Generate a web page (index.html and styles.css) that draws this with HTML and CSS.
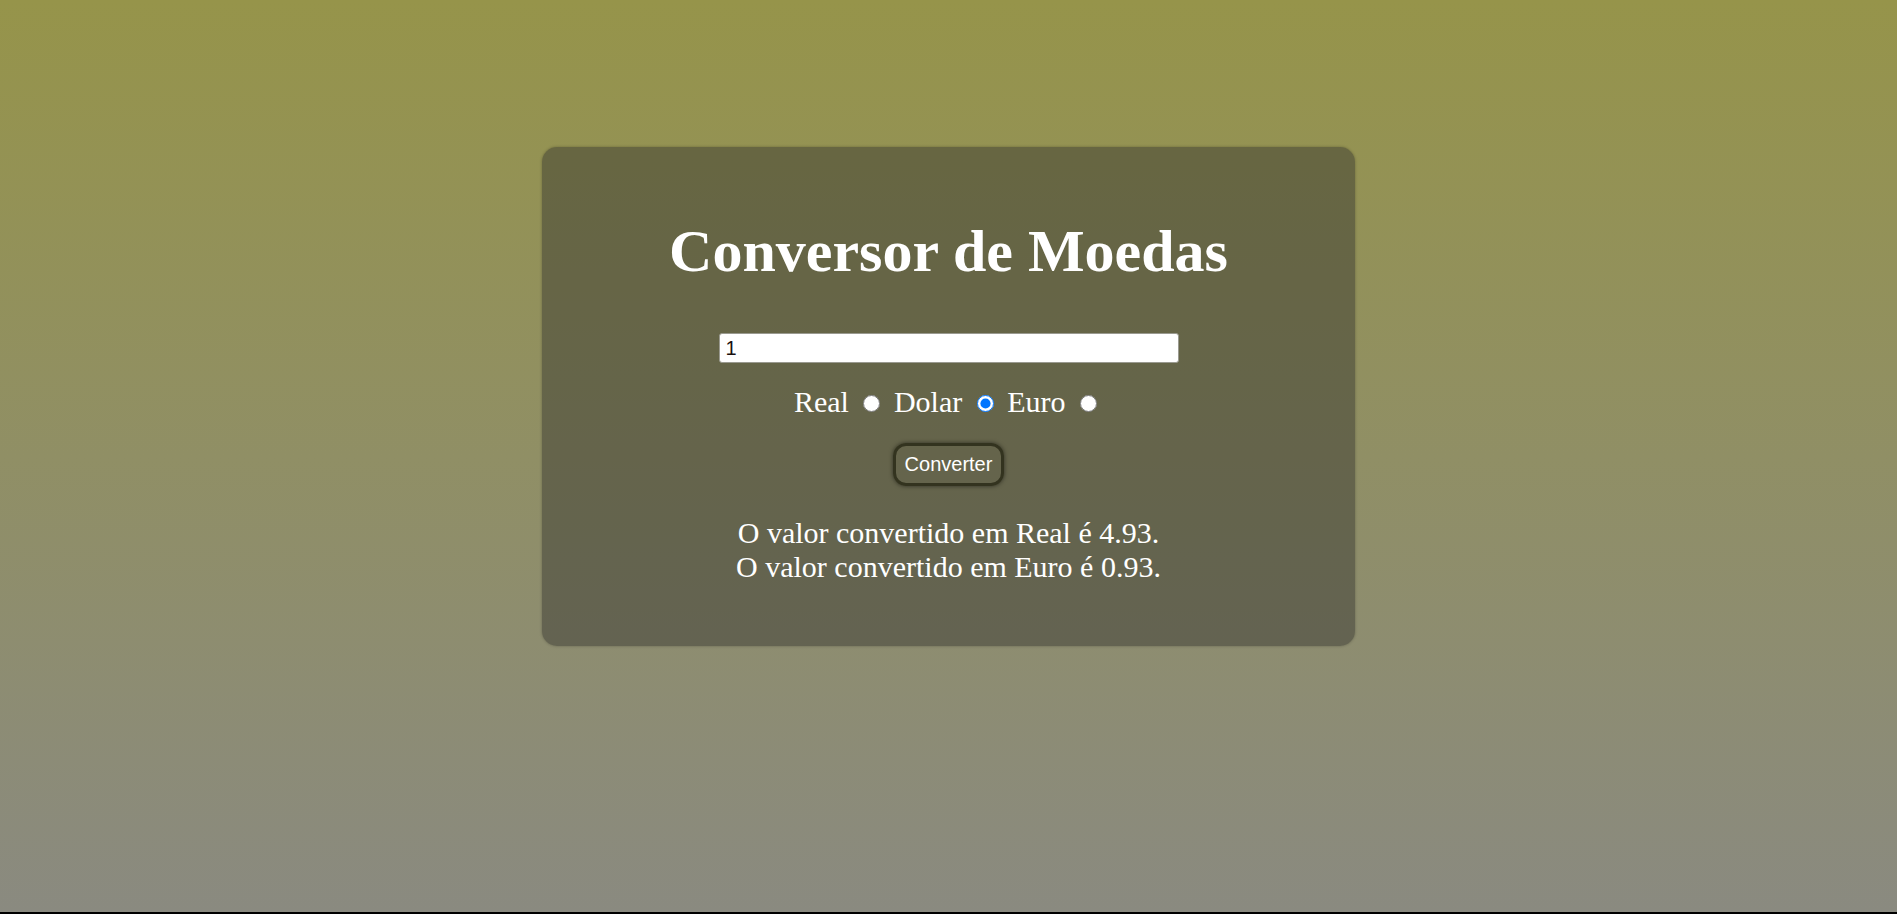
FILE: index.html
```html
<!DOCTYPE html>
<html lang="pt-BR">
<head>
<meta charset="utf-8">
<title>Conversor de Moedas</title>
<link rel="stylesheet" href="styles.css">
</head>
<body>
  <main class="card">
    <h1 class="title">Conversor de Moedas</h1>
    <input class="amount" type="text" value="1">
    <div class="currencies">
      Real <input class="radio" type="radio" name="moeda"> Dolar <input class="radio" type="radio" name="moeda" checked> Euro <input class="radio" type="radio" name="moeda">
    </div>
    <button class="convert" type="button">Converter</button>
    <div class="results">
      <div>O valor convertido em Real é 4.93.</div>
      <div>O valor convertido em Euro é 0.93.</div>
    </div>
  </main>
</body>
</html>
```

FILE: styles.css
```css
html {
  margin: 0;
  padding: 0;
  background: #000;
}

body {
  margin: 0;
  height: calc(100vh - 2px);
  background: linear-gradient(to bottom, #96944a, #8a8a80);
  font-family: "Liberation Serif", "Times New Roman", serif;
  color: #fff;
  display: flex;
  flex-direction: column;
  align-items: center;
}

.card {
  box-sizing: border-box;
  margin-top: 147px;
  width: 813px;
  height: 499px;
  padding-top: 71px;
  border-radius: 15px;
  background: rgba(55, 55, 48, 0.48);
  box-shadow: 0 0 3px rgba(0, 0, 0, 0.28);
  display: flex;
  flex-direction: column;
  align-items: center;
}

.title {
  margin: 0;
  font-size: 60px;
  line-height: 66px;
  font-weight: bold;
}

.amount {
  box-sizing: border-box;
  margin-top: 49px;
  width: 460px;
  height: 30px;
  padding: 0 6px;
  border: 1px solid #9a9a90;
  border-radius: 3px;
  background: #fff;
  color: #1a1010;
  font-family: "Liberation Sans", Arial, sans-serif;
  font-size: 20px;
}

.currencies {
  margin-top: 22px;
  font-size: 30px;
  line-height: 33px;
  white-space: nowrap;
}

.radio {
  width: 17px;
  height: 17px;
  margin: 0 6px 2px 7px;
}

.convert {
  box-sizing: border-box;
  margin-top: 25px;
  height: 43px;
  padding: 0 9px;
  border: 3px solid #33331f;
  border-radius: 13px;
  background: transparent;
  box-shadow: 0 0 4px rgba(0, 0, 0, 0.55);
  color: #fff;
  font-family: "Liberation Sans", Arial, sans-serif;
  font-size: 20px;
}

.results {
  margin-top: 30px;
  font-size: 30px;
  line-height: 34px;
  text-align: center;
}
```
